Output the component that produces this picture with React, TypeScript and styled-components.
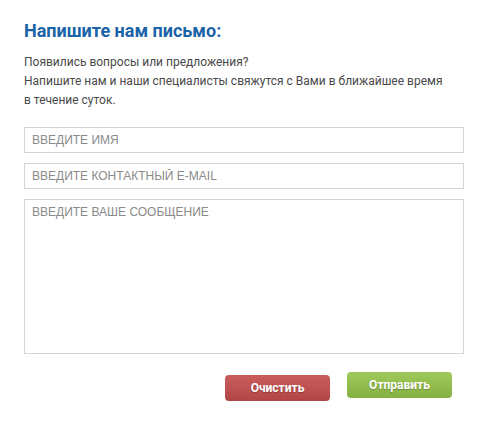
import React from "react";
import styled, { createGlobalStyle } from "styled-components";

const GlobalStyle = createGlobalStyle`
  html, body { margin: 0; padding: 0; background: #ffffff; }
  body { font-family: Roboto, "Liberation Sans", Arial, sans-serif; }
  * { box-sizing: border-box; }
`;

const Page = styled.div`
  width: 487px;
  padding: 20px 23px 0 24px;
`;

const Title = styled.h2`
  margin: 0;
  font-family: Roboto, "Liberation Sans", Arial, sans-serif;
  font-weight: 700;
  font-size: 18px;
  line-height: 22px;
  color: #1a63a9;
`;

const Intro = styled.p`
  margin: 11px 0 0;
  font-size: 12px;
  line-height: 19px;
  color: #4a4a4a;
`;

const Form = styled.form`
  display: flex;
  flex-direction: column;
  gap: 10px;
  margin-top: 17px;
`;

const fieldBase = `
  display: block;
  width: 440px;
  border: 1px solid #d4d4d4;
  background: #fff;
  font-family: "Liberation Sans", Arial, sans-serif;
  font-size: 12px;
  color: #333;
  padding: 0 7px;
  outline: none;
  &::placeholder {
    color: #8a8a8a;
    text-transform: uppercase;
    opacity: 1;
  }
`;

const Input = styled.input`
  ${fieldBase}
  height: 26px;
`;

const TextArea = styled.textarea`
  ${fieldBase}
  height: 155px;
  padding-top: 5px;
  resize: none;
`;

const Actions = styled.div`
  display: flex;
  justify-content: flex-end;
  align-items: flex-start;
  gap: 17px;
  padding-right: 12px;
`;

const Button = styled.button<{ $variant: "red" | "green"; $offset: number }>`
  width: 105px;
  height: 26px;
  margin-top: ${(p) => p.$offset}px;
  border: none;
  border-radius: 4px;
  font-family: Roboto, "Liberation Sans", Arial, sans-serif;
  font-weight: 700;
  font-size: 12px;
  color: #fff;
  text-shadow: 0 1px 1px rgba(0, 0, 0, 0.25);
  cursor: pointer;
  background: ${(p) =>
    p.$variant === "red"
      ? "linear-gradient(to bottom, #cb5d5d, #b14545)"
      : "linear-gradient(to bottom, #9fca5b, #85b042)"};
`;

export default function App() {
  return (
    <>
      <GlobalStyle />
      <Page>
        <Title>Напишите нам письмо:</Title>
        <Intro>
          Появились вопросы или предложения?
          <br />
          Напишите нам и наши специалисты свяжутся с Вами в ближайшее время
          <br />
          в течение суток.
        </Intro>
        <Form onSubmit={(e) => e.preventDefault()}>
          <Input type="text" placeholder="Введите имя" />
          <Input type="email" placeholder="Введите контактный e-mail" />
          <TextArea placeholder="Введите ваше сообщение" />
          <Actions>
            <Button type="reset" $variant="red" $offset={11}>
              Очистить
            </Button>
            <Button type="submit" $variant="green" $offset={8}>
              Отправить
            </Button>
          </Actions>
        </Form>
      </Page>
    </>
  );
}
